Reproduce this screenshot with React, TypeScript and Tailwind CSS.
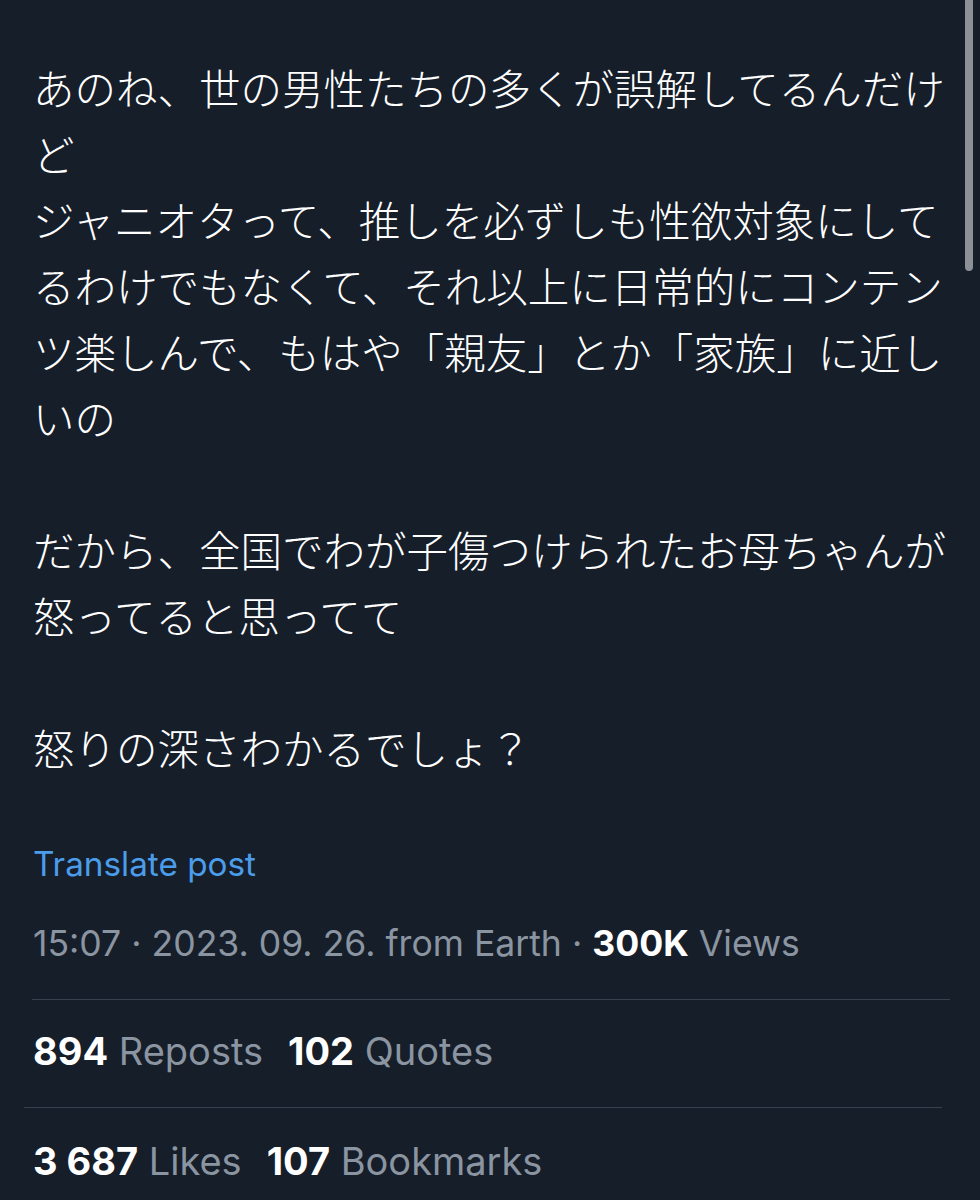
import React from 'react';

const lines = [
  'あのね、世の男性たちの多くが誤解してるんだけ',
  'ど',
  'ジャニオタって、推しを必ずしも性欲対象にして',
  'るわけでもなくて、それ以上に日常的にコンテン',
  'ツ楽しんで、もはや「親友」とか「家族」に近し',
  'いの',
  '',
  'だから、全国でわが子傷つけられたお母ちゃんが',
  '怒ってると思ってて',
  '',
  '怒りの深さわかるでしょ？',
];

const latin = { fontFamily: 'Inter, "Noto Sans", sans-serif' };

const Stat: React.FC<{ n: string; label: string }> = ({ n, label }) => (
  <span className="whitespace-nowrap">
    <span className="font-bold text-white">{n}</span>
    <span className="text-[#8b95a1]"> {label}</span>
  </span>
);

const App: React.FC = () => {
  return (
    <div className="relative w-[980px] h-[1200px] overflow-hidden bg-[#161e2a]">
      <div className="pl-[33px] pt-[54px]">
        <div
          className="text-[41.5px] leading-[66px] font-light text-white whitespace-pre"
          style={{ fontFamily: '"Noto Sans CJK JP", "Noto Sans", sans-serif' }}
        >
          {lines.map((l, i) => (
            <div key={i} className="h-[66px]">{l}</div>
          ))}
        </div>

        <div className="mt-[65px] h-[40px] flex items-center text-[33.3px] text-[#4b9dea]" style={latin}>
          Translate post
        </div>

        <div className="mt-[37px] h-[44px] flex items-center text-[35.6px] text-[#8b95a1] whitespace-pre" style={latin}>
          <span>15:07 · 2023. 09. 26. from Earth · </span>
          <span className="font-bold text-white">300K</span>
          <span> Views</span>
        </div>
      </div>

      <div className="mt-[33px] ml-[32px] w-[918px] h-px bg-[#37404c]" />

      <div className="pl-[33px] mt-[29px] h-[44px] flex items-center gap-[25px] text-[38px]" style={latin}>
        <Stat n="894" label="Reposts" />
        <Stat n="102" label="Quotes" />
      </div>

      <div className="mt-[34px] ml-[24px] w-[918px] h-px bg-[#37404c]" />

      <div className="pl-[33px] mt-[31px] h-[44px] flex items-center gap-[25px] text-[38px]" style={latin}>
        <Stat n="3 687" label="Likes" />
        <Stat n="107" label="Bookmarks" />
      </div>

      <div className="absolute right-[7px] top-0 w-[8px] h-[271px] rounded-b-full bg-[#8c9097]" />
    </div>
  );
};

export default App;
